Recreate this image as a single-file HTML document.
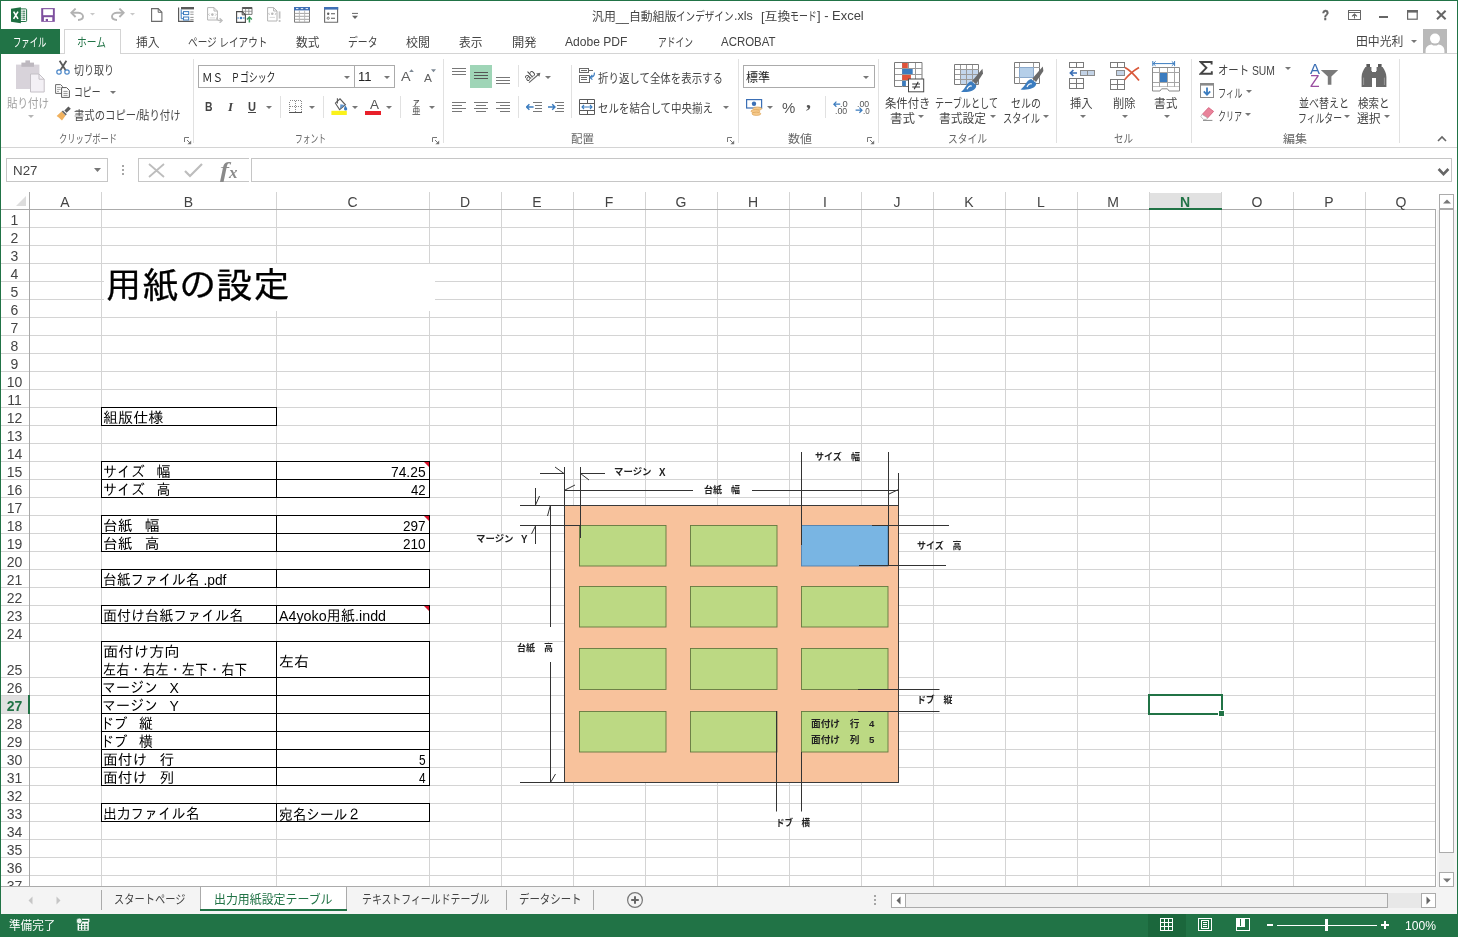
<!DOCTYPE html>
<html lang="ja"><head><meta charset="utf-8"><title>Excel</title><style>
html,body{margin:0;padding:0;background:#fff}
#win{position:relative;width:1458px;height:937px;overflow:hidden;background:#fff;font-family:"Liberation Sans","Noto Sans CJK JP",sans-serif;will-change:transform}
.b{position:absolute;display:block}
.t{position:absolute;white-space:pre;transform-origin:0 50%;display:block}
.ui{font-family:"Liberation Sans","Noto Sans CJK JP",sans-serif}
.cell{font-family:"Liberation Sans","IPAGothic","Noto Sans CJK JP",sans-serif}
.serif{font-family:"Liberation Serif",serif}
.hd{font-family:"Liberation Sans","IPAGothic","Noto Sans CJK JP",sans-serif;font-size:14px;line-height:18.5px;text-align:center;color:#444;transform:none}
.rn{font-family:"Liberation Sans","IPAGothic","Noto Sans CJK JP",sans-serif;font-size:14px;line-height:20px;text-align:center;color:#444}
</style></head>
<body><div id="win">
<div id="sheet"><svg class="b" style="left:0;top:0" width="1458" height="887" shape-rendering="crispEdges"><path d="M0 227.5H1436" stroke="#d4d4d4"/><path d="M0 245.5H1436" stroke="#d4d4d4"/><path d="M0 263.5H1436" stroke="#d4d4d4"/><path d="M0 281.5H1436" stroke="#d4d4d4"/><path d="M0 299.5H1436" stroke="#d4d4d4"/><path d="M0 317.5H1436" stroke="#d4d4d4"/><path d="M0 335.5H1436" stroke="#d4d4d4"/><path d="M0 353.5H1436" stroke="#d4d4d4"/><path d="M0 371.5H1436" stroke="#d4d4d4"/><path d="M0 389.5H1436" stroke="#d4d4d4"/><path d="M0 407.5H1436" stroke="#d4d4d4"/><path d="M0 425.5H1436" stroke="#d4d4d4"/><path d="M0 443.5H1436" stroke="#d4d4d4"/><path d="M0 461.5H1436" stroke="#d4d4d4"/><path d="M0 479.5H1436" stroke="#d4d4d4"/><path d="M0 497.5H1436" stroke="#d4d4d4"/><path d="M0 515.5H1436" stroke="#d4d4d4"/><path d="M0 533.5H1436" stroke="#d4d4d4"/><path d="M0 551.5H1436" stroke="#d4d4d4"/><path d="M0 569.5H1436" stroke="#d4d4d4"/><path d="M0 587.5H1436" stroke="#d4d4d4"/><path d="M0 605.5H1436" stroke="#d4d4d4"/><path d="M0 623.5H1436" stroke="#d4d4d4"/><path d="M0 641.5H1436" stroke="#d4d4d4"/><path d="M0 677.5H1436" stroke="#d4d4d4"/><path d="M0 695.5H1436" stroke="#d4d4d4"/><path d="M0 713.5H1436" stroke="#d4d4d4"/><path d="M0 731.5H1436" stroke="#d4d4d4"/><path d="M0 749.5H1436" stroke="#d4d4d4"/><path d="M0 767.5H1436" stroke="#d4d4d4"/><path d="M0 785.5H1436" stroke="#d4d4d4"/><path d="M0 803.5H1436" stroke="#d4d4d4"/><path d="M0 821.5H1436" stroke="#d4d4d4"/><path d="M0 839.5H1436" stroke="#d4d4d4"/><path d="M0 857.5H1436" stroke="#d4d4d4"/><path d="M0 875.5H1436" stroke="#d4d4d4"/><path d="M101.5 192V886" stroke="#d4d4d4"/><path d="M276.5 192V886" stroke="#d4d4d4"/><path d="M429.5 192V886" stroke="#d4d4d4"/><path d="M501.5 192V886" stroke="#d4d4d4"/><path d="M573.5 192V886" stroke="#d4d4d4"/><path d="M645.5 192V886" stroke="#d4d4d4"/><path d="M717.5 192V886" stroke="#d4d4d4"/><path d="M789.5 192V886" stroke="#d4d4d4"/><path d="M861.5 192V886" stroke="#d4d4d4"/><path d="M933.5 192V886" stroke="#d4d4d4"/><path d="M1005.5 192V886" stroke="#d4d4d4"/><path d="M1077.5 192V886" stroke="#d4d4d4"/><path d="M1149.5 192V886" stroke="#d4d4d4"/><path d="M1221.5 192V886" stroke="#d4d4d4"/><path d="M1293.5 192V886" stroke="#d4d4d4"/><path d="M1365.5 192V886" stroke="#d4d4d4"/><path d="M0 209.5H1436" stroke="#ababab"/><path d="M29.5 192V886" stroke="#a8a8a8"/><path d="M1435.5 210V886" stroke="#ababab"/></svg>
<svg class="b" style="left:15px;top:196px;" width="12" height="11" viewBox="0 0 12 11"><path d="M11 0V10H1Z" fill="#dddddd"/></svg>
<div class="b" style="left:1150px;top:193px;width:71px;height:15px;background:#e1e1e1"></div>
<div class="b" style="left:1149px;top:208px;width:73px;height:2px;background:#217346"></div>
<div class="b" style="left:1px;top:696px;width:27px;height:17px;background:#e1e1e1"></div>
<div class="b" style="left:28px;top:695px;width:2px;height:19px;background:#217346"></div>
<span class="t hd" style="left:29px;top:193px;width:72px">A</span>
<span class="t hd" style="left:101px;top:193px;width:175px">B</span>
<span class="t hd" style="left:276px;top:193px;width:153px">C</span>
<span class="t hd" style="left:429px;top:193px;width:72px">D</span>
<span class="t hd" style="left:501px;top:193px;width:72px">E</span>
<span class="t hd" style="left:573px;top:193px;width:72px">F</span>
<span class="t hd" style="left:645px;top:193px;width:72px">G</span>
<span class="t hd" style="left:717px;top:193px;width:72px">H</span>
<span class="t hd" style="left:789px;top:193px;width:72px">I</span>
<span class="t hd" style="left:861px;top:193px;width:72px">J</span>
<span class="t hd" style="left:933px;top:193px;width:72px">K</span>
<span class="t hd" style="left:1005px;top:193px;width:72px">L</span>
<span class="t hd" style="left:1077px;top:193px;width:72px">M</span>
<span class="t hd" style="left:1149px;top:193px;width:72px;color:#217346;font-weight:700">N</span>
<span class="t hd" style="left:1221px;top:193px;width:72px">O</span>
<span class="t hd" style="left:1293px;top:193px;width:72px">P</span>
<span class="t hd" style="left:1365px;top:193px;width:72px">Q</span>
<span class="t rn" style="left:0;top:210px;width:29px;">1</span>
<span class="t rn" style="left:0;top:228px;width:29px;">2</span>
<span class="t rn" style="left:0;top:246px;width:29px;">3</span>
<span class="t rn" style="left:0;top:264px;width:29px;">4</span>
<span class="t rn" style="left:0;top:282px;width:29px;">5</span>
<span class="t rn" style="left:0;top:300px;width:29px;">6</span>
<span class="t rn" style="left:0;top:318px;width:29px;">7</span>
<span class="t rn" style="left:0;top:336px;width:29px;">8</span>
<span class="t rn" style="left:0;top:354px;width:29px;">9</span>
<span class="t rn" style="left:0;top:372px;width:29px;">10</span>
<span class="t rn" style="left:0;top:390px;width:29px;">11</span>
<span class="t rn" style="left:0;top:408px;width:29px;">12</span>
<span class="t rn" style="left:0;top:426px;width:29px;">13</span>
<span class="t rn" style="left:0;top:444px;width:29px;">14</span>
<span class="t rn" style="left:0;top:462px;width:29px;">15</span>
<span class="t rn" style="left:0;top:480px;width:29px;">16</span>
<span class="t rn" style="left:0;top:498px;width:29px;">17</span>
<span class="t rn" style="left:0;top:516px;width:29px;">18</span>
<span class="t rn" style="left:0;top:534px;width:29px;">19</span>
<span class="t rn" style="left:0;top:552px;width:29px;">20</span>
<span class="t rn" style="left:0;top:570px;width:29px;">21</span>
<span class="t rn" style="left:0;top:588px;width:29px;">22</span>
<span class="t rn" style="left:0;top:606px;width:29px;">23</span>
<span class="t rn" style="left:0;top:624px;width:29px;">24</span>
<span class="t rn" style="left:0;top:660px;width:29px;">25</span>
<span class="t rn" style="left:0;top:678px;width:29px;">26</span>
<span class="t rn" style="left:0;top:696px;width:29px;color:#217346;font-weight:700;">27</span>
<span class="t rn" style="left:0;top:714px;width:29px;">28</span>
<span class="t rn" style="left:0;top:732px;width:29px;">29</span>
<span class="t rn" style="left:0;top:750px;width:29px;">30</span>
<span class="t rn" style="left:0;top:768px;width:29px;">31</span>
<span class="t rn" style="left:0;top:786px;width:29px;">32</span>
<span class="t rn" style="left:0;top:804px;width:29px;">33</span>
<span class="t rn" style="left:0;top:822px;width:29px;">34</span>
<span class="t rn" style="left:0;top:840px;width:29px;">35</span>
<span class="t rn" style="left:0;top:858px;width:29px;">36</span>
<span class="t rn" style="left:0;top:876px;width:29px;">37</span>
<div class="b" style="left:104px;top:264px;width:331px;height:47px;background:#fff"></div>
<span id="t0" class="t cell" style="left:104.5px;top:264px;font-size:36px;line-height:44px;color:#000;transform:scaleX(1.0278);-webkit-text-stroke:0.3px #000;">用紙の設定</span>
<div class="b" style="left:101px;top:407px;width:176px;height:19px;border:1px solid #000;box-sizing:border-box"></div>
<div class="b" style="left:101px;top:461px;width:176px;height:19px;border:1px solid #000;box-sizing:border-box"></div>
<div class="b" style="left:276px;top:461px;width:154px;height:19px;border:1px solid #000;box-sizing:border-box"></div>
<div class="b" style="left:101px;top:479px;width:176px;height:19px;border:1px solid #000;box-sizing:border-box"></div>
<div class="b" style="left:276px;top:479px;width:154px;height:19px;border:1px solid #000;box-sizing:border-box"></div>
<div class="b" style="left:101px;top:515px;width:176px;height:19px;border:1px solid #000;box-sizing:border-box"></div>
<div class="b" style="left:276px;top:515px;width:154px;height:19px;border:1px solid #000;box-sizing:border-box"></div>
<div class="b" style="left:101px;top:533px;width:176px;height:19px;border:1px solid #000;box-sizing:border-box"></div>
<div class="b" style="left:276px;top:533px;width:154px;height:19px;border:1px solid #000;box-sizing:border-box"></div>
<div class="b" style="left:101px;top:569px;width:176px;height:19px;border:1px solid #000;box-sizing:border-box"></div>
<div class="b" style="left:276px;top:569px;width:154px;height:19px;border:1px solid #000;box-sizing:border-box"></div>
<div class="b" style="left:101px;top:605px;width:176px;height:19px;border:1px solid #000;box-sizing:border-box"></div>
<div class="b" style="left:276px;top:605px;width:154px;height:19px;border:1px solid #000;box-sizing:border-box"></div>
<div class="b" style="left:101px;top:641px;width:176px;height:37px;border:1px solid #000;box-sizing:border-box"></div>
<div class="b" style="left:276px;top:641px;width:154px;height:37px;border:1px solid #000;box-sizing:border-box"></div>
<div class="b" style="left:101px;top:677px;width:176px;height:19px;border:1px solid #000;box-sizing:border-box"></div>
<div class="b" style="left:276px;top:677px;width:154px;height:19px;border:1px solid #000;box-sizing:border-box"></div>
<div class="b" style="left:101px;top:695px;width:176px;height:19px;border:1px solid #000;box-sizing:border-box"></div>
<div class="b" style="left:276px;top:695px;width:154px;height:19px;border:1px solid #000;box-sizing:border-box"></div>
<div class="b" style="left:101px;top:713px;width:176px;height:19px;border:1px solid #000;box-sizing:border-box"></div>
<div class="b" style="left:276px;top:713px;width:154px;height:19px;border:1px solid #000;box-sizing:border-box"></div>
<div class="b" style="left:101px;top:731px;width:176px;height:19px;border:1px solid #000;box-sizing:border-box"></div>
<div class="b" style="left:276px;top:731px;width:154px;height:19px;border:1px solid #000;box-sizing:border-box"></div>
<div class="b" style="left:101px;top:749px;width:176px;height:19px;border:1px solid #000;box-sizing:border-box"></div>
<div class="b" style="left:276px;top:749px;width:154px;height:19px;border:1px solid #000;box-sizing:border-box"></div>
<div class="b" style="left:101px;top:767px;width:176px;height:19px;border:1px solid #000;box-sizing:border-box"></div>
<div class="b" style="left:276px;top:767px;width:154px;height:19px;border:1px solid #000;box-sizing:border-box"></div>
<div class="b" style="left:101px;top:803px;width:176px;height:19px;border:1px solid #000;box-sizing:border-box"></div>
<div class="b" style="left:276px;top:803px;width:154px;height:19px;border:1px solid #000;box-sizing:border-box"></div>
<span id="t1" class="t cell" style="left:103.3px;top:409px;font-size:15px;line-height:18px;color:#000;transform:scaleX(1.0067);">組版仕様</span>
<span id="t2" class="t cell" style="left:103.3px;top:463px;font-size:15px;line-height:18px;color:#000;transform:scaleX(0.9295);">サイズ   幅</span>
<span id="t3" class="t cell" style="left:103.3px;top:481px;font-size:15px;line-height:18px;color:#000;transform:scaleX(0.9295);">サイズ   高</span>
<span id="t4" class="t cell" style="left:103.3px;top:517px;font-size:15px;line-height:18px;color:#000;transform:scaleX(0.9806);">台紙   幅</span>
<span id="t5" class="t cell" style="left:103.3px;top:535px;font-size:15px;line-height:18px;color:#000;transform:scaleX(0.9806);">台紙   高</span>
<span id="t6" class="t cell" style="left:103.3px;top:571px;font-size:15px;line-height:18px;color:#000;transform:scaleX(0.9196);">台紙ファイル名 .pdf</span>
<span id="t7" class="t cell" style="left:103.3px;top:607px;font-size:15px;line-height:18px;color:#000;transform:scaleX(0.9360);">面付け台紙ファイル名</span>
<span id="t8" class="t cell" style="left:103.3px;top:643px;font-size:15px;line-height:18px;color:#000;transform:scaleX(1.0227);">面付け方向</span>
<span id="t9" class="t cell" style="left:103.3px;top:660.5px;font-size:15px;line-height:18px;color:#000;transform:scaleX(0.8752);">左右・右左・左下・右下</span>
<span id="t10" class="t cell" style="left:101.8px;top:679px;font-size:15px;line-height:18px;color:#000;transform:scaleX(0.9319);">マージン   X</span>
<span id="t11" class="t cell" style="left:101.8px;top:697px;font-size:15px;line-height:18px;color:#000;transform:scaleX(0.9319);">マージン   Y</span>
<span id="t12" class="t cell" style="left:99.8px;top:715px;font-size:15px;line-height:18px;color:#000;transform:scaleX(0.9198);">ドブ   縦</span>
<span id="t13" class="t cell" style="left:99.8px;top:733px;font-size:15px;line-height:18px;color:#000;transform:scaleX(0.9198);">ドブ   横</span>
<span id="t14" class="t cell" style="left:103.3px;top:751px;font-size:15px;line-height:18px;color:#000;transform:scaleX(0.9846);">面付け   行</span>
<span id="t15" class="t cell" style="left:103.3px;top:769px;font-size:15px;line-height:18px;color:#000;transform:scaleX(0.9846);">面付け   列</span>
<span id="t16" class="t cell" style="left:103.3px;top:805px;font-size:15px;line-height:18px;color:#000;transform:scaleX(0.9181);">出力ファイル名</span>
<span id="t17" class="t cell" style="left:391.3px;top:463px;font-size:15px;line-height:18px;color:#000;transform:scaleX(0.9215);">74.25</span>
<span id="t18" class="t cell" style="left:411.3px;top:481px;font-size:15px;line-height:18px;color:#000;transform:scaleX(0.8749);">42</span>
<span id="t19" class="t cell" style="left:403.3px;top:517px;font-size:15px;line-height:18px;color:#000;transform:scaleX(0.9029);">297</span>
<span id="t20" class="t cell" style="left:403.3px;top:535px;font-size:15px;line-height:18px;color:#000;transform:scaleX(0.9029);">210</span>
<span id="t21" class="t cell" style="left:419.3px;top:751px;font-size:15px;line-height:18px;color:#000;transform:scaleX(0.7910);">5</span>
<span id="t22" class="t cell" style="left:419.3px;top:769px;font-size:15px;line-height:18px;color:#000;transform:scaleX(0.7910);">4</span>
<span id="t23" class="t cell" style="left:279px;top:607px;font-size:15px;line-height:18px;color:#000;transform:scaleX(0.9506);">A4yoko用紙.indd</span>
<span id="t24" class="t cell" style="left:279px;top:653px;font-size:15px;line-height:18px;color:#000;transform:scaleX(1.0000);">左右</span>
<span id="t25" class="t cell" style="left:279px;top:806px;font-size:15px;line-height:18px;color:#000;transform:scaleX(0.9111);">宛名シール２</span>
<svg class="b" style="left:423.5px;top:462px;" width="5.5" height="5.5" viewBox="0 0 5.5 5.5"><path d="M0 0H5.5V5.5Z" fill="#d8112a"/></svg>
<svg class="b" style="left:423.5px;top:516px;" width="5.5" height="5.5" viewBox="0 0 5.5 5.5"><path d="M0 0H5.5V5.5Z" fill="#d8112a"/></svg>
<svg class="b" style="left:423.5px;top:606px;" width="5.5" height="5.5" viewBox="0 0 5.5 5.5"><path d="M0 0H5.5V5.5Z" fill="#d8112a"/></svg>
<div class="b" style="left:1148px;top:694px;width:75px;height:21px;border:2px solid #217346;box-sizing:border-box"></div>
<div class="b" style="left:1219px;top:711px;width:6px;height:6px;background:#217346;border:1px solid #fff;box-sizing:border-box;width:7px;height:7px;left:1218px;top:710px"></div>
<svg class="b" style="left:460px;top:440px" width="520" height="400" viewBox="460 440 520 400"><rect x="564.5" y="505.5" width="334" height="277" fill="#f8c29c" stroke="#3a3a3a" stroke-width="1"/><rect x="579.5" y="525.5" width="86.5" height="40.5" fill="#bcd983" stroke="#64793f" stroke-width="0.9"/><rect x="690.5" y="525.5" width="86.5" height="40.5" fill="#bcd983" stroke="#64793f" stroke-width="0.9"/><rect x="801.5" y="525.5" width="86.5" height="40.5" fill="#79b5e3" stroke="#4f7fae" stroke-width="0.9"/><rect x="579.5" y="586.5" width="86.5" height="40.5" fill="#bcd983" stroke="#64793f" stroke-width="0.9"/><rect x="690.5" y="586.5" width="86.5" height="40.5" fill="#bcd983" stroke="#64793f" stroke-width="0.9"/><rect x="801.5" y="586.5" width="86.5" height="40.5" fill="#bcd983" stroke="#64793f" stroke-width="0.9"/><rect x="579.5" y="648.5" width="86.5" height="41" fill="#bcd983" stroke="#64793f" stroke-width="0.9"/><rect x="690.5" y="648.5" width="86.5" height="41" fill="#bcd983" stroke="#64793f" stroke-width="0.9"/><rect x="801.5" y="648.5" width="86.5" height="41" fill="#bcd983" stroke="#64793f" stroke-width="0.9"/><rect x="579.5" y="711.5" width="86.5" height="40.5" fill="#bcd983" stroke="#64793f" stroke-width="0.9"/><rect x="690.5" y="711.5" width="86.5" height="40.5" fill="#bcd983" stroke="#64793f" stroke-width="0.9"/><rect x="801.5" y="711.5" width="86.5" height="40.5" fill="#bcd983" stroke="#64793f" stroke-width="0.9"/><path d="M540 473.5L564 473.5" stroke="#333" stroke-width="1" fill="none"/><path d="M555 467L564 473.5" stroke="#333" stroke-width="1" fill="none"/><path d="M580.5 473.5L605 473.5" stroke="#333" stroke-width="1" fill="none"/><path d="M580.5 473.5L589 480" stroke="#333" stroke-width="1" fill="none"/><path d="M564.5 467L564.5 538" stroke="#333" stroke-width="1" fill="none"/><path d="M580.5 467L580.5 538" stroke="#333" stroke-width="1" fill="none"/><path d="M564 490.5L693 490.5" stroke="#333" stroke-width="1" fill="none"/><path d="M752 490.5L898.5 490.5" stroke="#333" stroke-width="1" fill="none"/><path d="M564 490.5L575 485" stroke="#333" stroke-width="1" fill="none"/><path d="M888 494.5L898.5 489.5" stroke="#333" stroke-width="1" fill="none"/><path d="M898.5 473L898.5 506" stroke="#333" stroke-width="1" fill="none"/><path d="M520 505.5L565 505.5" stroke="#333" stroke-width="1" fill="none"/><path d="M520 525.5L580 525.5" stroke="#333" stroke-width="1" fill="none"/><path d="M535.5 488L535.5 505" stroke="#333" stroke-width="1" fill="none"/><path d="M535.5 505L539.5 496" stroke="#333" stroke-width="1" fill="none"/><path d="M535.5 526L535.5 544" stroke="#333" stroke-width="1" fill="none"/><path d="M535.5 526L531.5 534" stroke="#333" stroke-width="1" fill="none"/><path d="M550.5 505L550.5 627" stroke="#333" stroke-width="1" fill="none"/><path d="M550.5 662L550.5 782.5" stroke="#333" stroke-width="1" fill="none"/><path d="M550.5 505L547.5 516" stroke="#333" stroke-width="1" fill="none"/><path d="M550.5 782.5L555.5 774" stroke="#333" stroke-width="1" fill="none"/><path d="M520 782.5L565 782.5" stroke="#333" stroke-width="1" fill="none"/><path d="M801.5 452L801.5 545" stroke="#333" stroke-width="1" fill="none"/><path d="M888.5 452L888.5 565" stroke="#333" stroke-width="1" fill="none"/><path d="M872 525.5L949 525.5" stroke="#333" stroke-width="1" fill="none"/><path d="M859 565.5L946 565.5" stroke="#333" stroke-width="1" fill="none"/><path d="M858 689.5L939.5 689.5" stroke="#333" stroke-width="1" fill="none"/><path d="M858 711.5L939.5 711.5" stroke="#333" stroke-width="1" fill="none"/><path d="M776.5 711L776.5 811.5" stroke="#333" stroke-width="1" fill="none"/><path d="M801.5 752L801.5 811.5" stroke="#333" stroke-width="1" fill="none"/></svg>
<span id="t26" class="t ui" style="left:613.5px;top:465.8px;font-size:9.5px;line-height:12px;color:#222;font-weight:700;transform:scaleX(0.9917);">マージン</span>
<span id="t27" class="t ui" style="left:659.3px;top:466px;font-size:11px;line-height:12px;color:#222;font-weight:700;transform:scaleX(0.8851);">X</span>
<span id="t28" class="t ui" style="left:704px;top:483.8px;font-size:9.5px;line-height:12px;color:#222;font-weight:700;transform:scaleX(0.9470);">台紙　幅</span>
<span id="t29" class="t ui" style="left:815px;top:451.3px;font-size:9.5px;line-height:12px;color:#222;font-weight:700;transform:scaleX(0.9530);">サイズ　幅</span>
<span id="t30" class="t ui" style="left:475.7px;top:532.8px;font-size:9.5px;line-height:12px;color:#222;font-weight:700;transform:scaleX(0.9917);">マージン</span>
<span id="t31" class="t ui" style="left:520.5px;top:533px;font-size:11px;line-height:12px;color:#222;font-weight:700;transform:scaleX(0.8851);">Y</span>
<span id="t32" class="t ui" style="left:916.5px;top:539.8px;font-size:9.5px;line-height:12px;color:#222;font-weight:700;transform:scaleX(0.9424);">サイズ　高</span>
<span id="t33" class="t ui" style="left:517px;top:641.8px;font-size:9.5px;line-height:12px;color:#222;font-weight:700;transform:scaleX(0.9470);">台紙　高</span>
<span id="t34" class="t ui" style="left:916.5px;top:693.8px;font-size:9.5px;line-height:12px;color:#222;font-weight:700;transform:scaleX(0.9338);">ドブ　縦</span>
<span id="t35" class="t ui" style="left:811px;top:717.8px;font-size:9.5px;line-height:12px;color:#222;font-weight:700;transform:scaleX(1.0193);">面付け　行　4</span>
<span id="t36" class="t ui" style="left:811px;top:733.8px;font-size:9.5px;line-height:12px;color:#222;font-weight:700;transform:scaleX(1.0193);">面付け　列　5</span>
<span id="t37" class="t ui" style="left:776px;top:817.3px;font-size:9.5px;line-height:12px;color:#222;font-weight:700;transform:scaleX(0.8944);">ドブ　横</span></div>
<div id="bottom"><div class="b" style="left:1px;top:887px;width:1456px;height:27px;background:#f4f4f4"></div>
<div class="b" style="left:1px;top:886px;width:1435px;height:1px;background:#ababab"></div>
<div class="b" style="left:1437px;top:192px;width:20px;height:695px;background:#f4f4f4"></div>
<div class="b" style="left:1437px;top:192px;width:20px;height:18px;background:#fff"></div>
<div class="b" style="left:1439px;top:209px;width:15px;height:663px;background:#f0f0f0"></div>
<div class="b" style="left:1439px;top:209px;width:15px;height:644px;background:#fff;border:1px solid #ababab;box-sizing:border-box"></div>
<div class="b" style="left:1439px;top:194px;width:15px;height:15px;background:#fff;border:1px solid #ababab;box-sizing:border-box"></div>
<div class="b" style="left:1439px;top:872px;width:15px;height:15px;background:#fff;border:1px solid #ababab;box-sizing:border-box"></div>
<svg class="b" style="left:1442.5px;top:199px;" width="8" height="5" viewBox="0 0 8 5"><path d="M0 4.5H8L4 0.5Z" fill="#777"/></svg>
<svg class="b" style="left:1442.5px;top:877.5px;" width="8" height="5" viewBox="0 0 8 5"><path d="M0 0.5H8L4 4.5Z" fill="#777"/></svg>
<svg class="b" style="left:28px;top:895.5px;" width="5" height="9" viewBox="0 0 5 9"><path d="M4.5 0.5V8.5L0.5 4.5Z" fill="#c6c6c6"/></svg>
<svg class="b" style="left:56px;top:895.5px;" width="5" height="9" viewBox="0 0 5 9"><path d="M0.5 0.5V8.5L4.5 4.5Z" fill="#c6c6c6"/></svg>
<div class="b" style="left:101px;top:890px;width:1px;height:20px;background:#ababab"></div>
<div class="b" style="left:506px;top:890px;width:1px;height:20px;background:#ababab"></div>
<div class="b" style="left:593px;top:890px;width:1px;height:20px;background:#ababab"></div>
<span id="t38" class="t ui" style="left:114px;top:891px;font-size:12.5px;line-height:18px;color:#444;transform:scaleX(0.8193);">スタートページ</span>
<div class="b" style="left:200px;top:887px;width:147px;height:23px;background:#fff"></div>
<div class="b" style="left:200px;top:887px;width:1px;height:24px;background:#ababab"></div>
<div class="b" style="left:346px;top:887px;width:1px;height:24px;background:#ababab"></div>
<div class="b" style="left:200px;top:909px;width:147px;height:2px;background:#217346"></div>
<span id="t39" class="t ui" style="left:213.5px;top:891px;font-size:12.5px;line-height:18px;color:#217346;transform:scaleX(0.9536);">出力用紙設定テーブル</span>
<span id="t40" class="t ui" style="left:361.5px;top:891px;font-size:12.5px;line-height:18px;color:#444;transform:scaleX(0.7912);">テキストフィールドテーブル</span>
<span id="t41" class="t ui" style="left:519px;top:891px;font-size:12.5px;line-height:18px;color:#444;transform:scaleX(0.8332);">データシート</span>
<svg class="b" style="left:626px;top:891px;" width="18" height="18" viewBox="0 0 18 18"><circle cx="9" cy="9" r="7.4" fill="none" stroke="#777" stroke-width="1.2"/><path d="M5.2 9H12.8M9 5.2V12.8" stroke="#666" stroke-width="2"/></svg>
<div class="b" style="left:874px;top:895px;width:2px;height:2px;background:#a6a6a6"></div>
<div class="b" style="left:874px;top:899px;width:2px;height:2px;background:#a6a6a6"></div>
<div class="b" style="left:874px;top:903px;width:2px;height:2px;background:#a6a6a6"></div>
<div class="b" style="left:891px;top:893px;width:545px;height:15px;background:#e8e8e8"></div>
<div class="b" style="left:891px;top:893px;width:15px;height:15px;background:#fff;border:1px solid #ababab;box-sizing:border-box"></div>
<div class="b" style="left:1421px;top:893px;width:15px;height:15px;background:#fff;border:1px solid #ababab;box-sizing:border-box"></div>
<div class="b" style="left:905px;top:893px;width:483px;height:15px;background:#f0f0f0;border:1px solid #ababab;box-sizing:border-box"></div>
<svg class="b" style="left:896px;top:896px;" width="5" height="9" viewBox="0 0 5 9"><path d="M4.5 0.5V8.5L0.5 4.5Z" fill="#666"/></svg>
<svg class="b" style="left:1426px;top:896px;" width="5" height="9" viewBox="0 0 5 9"><path d="M0.5 0.5V8.5L4.5 4.5Z" fill="#666"/></svg>
<div class="b" style="left:0px;top:914px;width:1458px;height:23px;background:#217346"></div>
<span id="t42" class="t ui" style="left:8.5px;top:918px;font-size:12px;line-height:17px;color:#fff;transform:scaleX(0.9684);">準備完了</span>
<svg class="b" style="left:76px;top:918px;" width="14" height="14" viewBox="0 0 14 14"><rect x="1.6" y="3.6" width="11.2" height="9" fill="#fff"/><path d="M6 1.4H12.8V4" fill="none" stroke="#fff" stroke-width="1.2"/><rect x="3" y="5.6" width="2" height="1.6" fill="#217346"/><rect x="3" y="8" width="2" height="1.6" fill="#217346"/><rect x="3" y="10.4" width="2" height="1.6" fill="#217346"/><rect x="6.2" y="5.6" width="2" height="1.6" fill="#217346"/><rect x="6.2" y="8" width="2" height="1.6" fill="#217346"/><rect x="6.2" y="10.4" width="2" height="1.6" fill="#217346"/><rect x="9.4" y="5.6" width="2" height="1.6" fill="#217346"/><rect x="9.4" y="8" width="2" height="1.6" fill="#217346"/><rect x="9.4" y="10.4" width="2" height="1.6" fill="#217346"/><circle cx="3.2" cy="3" r="2.9" fill="#e6f2ea" stroke="#217346" stroke-width="0.7"/></svg>
<div class="b" style="left:1148px;top:914px;width:38px;height:23px;background:#1b673c"></div>
<svg class="b" style="left:1160px;top:918px;" width="13" height="13" viewBox="0 0 13 13"><path d="M0.5 0.5H12.5V12.5H0.5ZM0.5 4.5H12.5M0.5 8.5H12.5M4.5 0.5V12.5M8.5 0.5V12.5" fill="none" stroke="#fff" stroke-width="1" shape-rendering="crispEdges"/></svg>
<svg class="b" style="left:1198px;top:918px;shape-rendering:crispEdges;" width="14" height="13" viewBox="0 0 14 13"><path d="M0.5 0.5H13.5V12.5H0.5Z" fill="none" stroke="#fff"/><path d="M3.5 2.5H10.5V10.5H3.5Z" fill="none" stroke="#fff"/><path d="M5 4.5H9M5 6.5H9M5 8.5H9" stroke="#fff" stroke-width="1"/></svg>
<svg class="b" style="left:1236px;top:918px;shape-rendering:crispEdges;" width="15" height="13" viewBox="0 0 15 13"><path d="M0.5 0.5H13.5V12.5H0.5Z" fill="none" stroke="#fff"/><path d="M1 1H4.4V8H1ZM5.4 1H8.6V8H5.4Z" fill="#fff"/><path d="M1 8H9" stroke="#fff"/></svg>
<div class="b" style="left:1267px;top:924px;width:6px;height:2px;background:#fff"></div>
<div class="b" style="left:1277px;top:924.5px;width:100px;height:1px;background:#fff"></div>
<div class="b" style="left:1325px;top:919px;width:3px;height:12px;background:#fff"></div>
<div class="b" style="left:1380.5px;top:924px;width:8px;height:2px;background:#fff"></div>
<div class="b" style="left:1383.5px;top:921px;width:2px;height:8px;background:#fff"></div>
<span id="t43" class="t ui" style="left:1405px;top:918px;font-size:12px;line-height:17px;color:#fff;transform:scaleX(1.0097);">100%</span></div>
<div id="titlebar"><span id="t44" class="t ui" style="left:591.5px;top:8.5px;font-size:12px;line-height:17px;color:#444;transform:scaleX(0.9899);">汎用__自動組版</span>
<span id="t45" class="t ui" style="left:676px;top:8.5px;font-size:12px;line-height:17px;color:#444;transform:scaleX(0.7984);">インデザイン</span>
<span id="t46" class="t ui" style="left:733.8px;top:7.5px;font-size:12px;line-height:17px;color:#444;transform:scaleX(1.0389);">.xls</span>
<span id="t47" class="t ui" style="left:760.5px;top:8.5px;font-size:12px;line-height:17px;color:#444;transform:scaleX(1.0679);">[互換</span>
<span id="t48" class="t ui" style="left:789.7px;top:8.5px;font-size:12px;line-height:17px;color:#444;transform:scaleX(0.7441);">モード</span>
<span id="t49" class="t ui" style="left:816.8px;top:7.5px;font-size:12px;line-height:17px;color:#444;transform:scaleX(1.0774);">] - Excel</span>
<svg class="b" style="left:11px;top:6.5px;" width="17" height="17" viewBox="0 0 17 17"><rect x="8" y="1.9" width="7.6" height="12.6" rx="0.8" fill="#fff" stroke="#217346" stroke-width="1"/><path d="M11.4 4.2H14.2M11.4 6.2H14.2M11.4 8.2H14.2M11.4 10.2H14.2M11.4 12.2H14.2" stroke="#1e6b3f" stroke-width="1"/><path d="M9.6 4.2H10.6M9.6 6.2H10.6M9.6 8.2H10.6M9.6 10.2H10.6M9.6 12.2H10.6" stroke="#1e6b3f" stroke-width="0.9"/><path d="M0 1.8L9.9 0.2V16.2L0 14.7Z" fill="#1e6f42"/><path d="M2.6 4.7L7 11.9M7 4.7L2.6 11.9" stroke="#fff" stroke-width="1.6"/></svg>
<svg class="b" style="left:41px;top:8px;" width="14" height="14" viewBox="0 0 14 14"><path d="M0.2 0.1H13.8V13.8H0.2Z" fill="#7d4f9e"/><path d="M2.2 1.2H11.9V7.2H2.2Z" fill="#fff"/><path d="M2.9 9.2H11.3V13H2.9Z" fill="#fff"/><path d="M4.7 10.9H7V13H4.7Z" fill="#7d4f9e"/></svg>
<svg class="b" style="left:70px;top:8px;" width="15" height="13" viewBox="0 0 15 13"><path d="M1.3 4.8H8.2C11.6 4.8 13 7 13 8.6C13 10.6 11.4 12 8 12" fill="none" stroke="#b2b2b2" stroke-width="1.9"/><path d="M5.6 0.6L1.3 4.8L5.6 9" fill="none" stroke="#b2b2b2" stroke-width="1.9"/></svg>
<svg class="b" style="left:110px;top:8px;" width="15" height="13" viewBox="0 0 15 13"><g transform="translate(15,0) scale(-1,1)"><path d="M1.3 4.8H8.2C11.6 4.8 13 7 13 8.6C13 10.6 11.4 12 8 12" fill="none" stroke="#b2b2b2" stroke-width="1.9"/><path d="M5.6 0.6L1.3 4.8L5.6 9" fill="none" stroke="#b2b2b2" stroke-width="1.9"/></g></svg>
<svg class="b" style="left:90.2px;top:13px;" width="5" height="2.6" viewBox="0 0 5 2.6"><path d="M0 0H5 L2.5 2.6Z" fill="#c8c8c8"/></svg>
<svg class="b" style="left:130.2px;top:13px;" width="5" height="2.6" viewBox="0 0 5 2.6"><path d="M0 0H5 L2.5 2.6Z" fill="#c8c8c8"/></svg>
<svg class="b" style="left:151px;top:8px;" width="12" height="14" viewBox="0 0 12 14"><path d="M0.6 0.6H7.2L10.9 4.3V13.4H0.6Z" fill="#fff" stroke="#6a6a6a" stroke-width="1.1"/><path d="M7.2 0.6V4.3H10.9" fill="none" stroke="#6a6a6a" stroke-width="1"/></svg>
<svg class="b" style="left:178px;top:7px;" width="17" height="15" viewBox="0 0 17 15"><path d="M0.6 0.6V14.4H15.6" fill="none" stroke="#5a5a5a" stroke-width="1.2"/><path d="M3 0H16V2.4H3Z" fill="#5a5a5a"/><path d="M3.2 2.4V11.7H5.5M3.2 6.2H5.5" fill="none" stroke="#3b7cbf" stroke-width="1"/><rect x="5.5" y="4.6" width="5.2" height="3" fill="#fff" stroke="#3b7cbf" stroke-width="1"/><rect x="5.5" y="10" width="5.2" height="3" fill="#fff" stroke="#3b7cbf" stroke-width="1"/><path d="M12.3 5H15.6M12.3 7.3H15.6M12.3 10.4H15.6M12.3 12.7H15.6" stroke="#8a8a8a" stroke-width="0.9"/></svg>
<svg class="b" style="left:206px;top:7px;" width="18" height="16" viewBox="0 0 18 16"><path d="M1.6 0.6H8L11.4 4V13H1.6Z" fill="#fff" stroke="#b4b4b4" stroke-width="1"/><path d="M8 0.6V4H11.4" fill="none" stroke="#b4b4b4"/><path d="M3.6 6.6L2.6 7.6L3.6 8.6M9.2 6.6L10.2 7.6L9.2 8.6" fill="none" stroke="#b4b4b4" stroke-width="0.9"/><circle cx="6.4" cy="7.6" r="1.3" fill="#b9b9b9"/><path d="M3.6 10.9H9.2" stroke="#d8d8d8"/><path d="M10.6 10.6C10.6 13.4 12 13.6 16 13.6M13.6 11.2L16.2 13.6L13.6 16" fill="none" stroke="#bdbdbd" stroke-width="1.2"/></svg>
<svg class="b" style="left:236px;top:7px;" width="17" height="16" viewBox="0 0 17 16"><path d="M6.4 0.4H16V7.4H6.4Z" fill="#fff" stroke="#6a6a6a" stroke-width="0.9"/><path d="M6.4 0H16V2H6.4Z" fill="#5a5a5a"/><path d="M6.4 4.3H16M9.6 2V7.4M12.8 2V7.4" stroke="#8a8a8a" stroke-width="0.8"/><path d="M0.6 4.6H6.2L9.4 7.8V15.4H0.6Z" fill="#fff" stroke="#4a4a4a" stroke-width="1.1"/><path d="M6.2 4.6V7.8H9.4" fill="none" stroke="#4a4a4a"/><path d="M2.6 10L1.6 11L2.6 12M7.4 10L8.4 11L7.4 12" fill="none" stroke="#3b7cbf" stroke-width="0.9"/><circle cx="5" cy="11" r="1.3" fill="#3b7cbf"/><path d="M13.4 15.6V10.4M11 12.6L13.4 10L15.8 12.6" fill="none" stroke="#3d9a5c" stroke-width="1.5"/></svg>
<svg class="b" style="left:266px;top:7px;" width="16" height="16" viewBox="0 0 16 16"><path d="M1.6 0.6H7.6L11 4V14H1.6Z" fill="#fff" stroke="#b4b4b4" stroke-width="1"/><path d="M7.6 0.6V4H11" fill="none" stroke="#b4b4b4"/><path d="M3.6 5.8L2.6 6.8L3.6 7.8M9 5.8L10 6.8L9 7.8" fill="none" stroke="#b4b4b4" stroke-width="0.9"/><circle cx="6.3" cy="6.8" r="1.3" fill="#b9b9b9"/><path d="M3.6 10.4H9" stroke="#d8d8d8"/><path d="M13.6 4.4V11.6" stroke="#c2c2c2" stroke-width="1.8"/><path d="M13.6 13V15" stroke="#c2c2c2" stroke-width="1.8"/></svg>
<svg class="b" style="left:294px;top:7px;" width="16" height="16" viewBox="0 0 16 16"><path d="M0.5 0.5H15.5V15.2H0.5Z" fill="#fff" stroke="#7a7a7a" stroke-width="1"/><path d="M0 0H16V3.4H0Z" fill="#3f6fb5"/><path d="M2 1.6H4.4M6.8 1.6H9.2M11.6 1.6H14" stroke="#fff" stroke-width="0.9"/><path d="M0.5 6.4H15.5M0.5 9.3H15.5M0.5 12.3H15.5" stroke="#9a9a9a" stroke-width="0.9"/><path d="M5.4 3.4V15M10.6 3.4V15" stroke="#b5b5b5" stroke-width="0.9"/></svg>
<svg class="b" style="left:324px;top:7px;" width="15" height="16" viewBox="0 0 15 16"><path d="M0.6 0.6H13.6V15.2H0.6Z" fill="#fff" stroke="#6a6a6a" stroke-width="1.1"/><path d="M0 0H14.2V2.6H0Z" fill="#3f6fb5"/><circle cx="4.2" cy="6.8" r="1.2" fill="#5a5a5a"/><circle cx="4.2" cy="11.2" r="1.1" fill="#fff" stroke="#5a5a5a" stroke-width="0.8"/><path d="M7 6.8H11M7 11.2H11" stroke="#5a5a5a" stroke-width="1.1"/></svg>
<svg class="b" style="left:351px;top:12px;" width="8" height="8" viewBox="0 0 8 8"><path d="M1 1.4H7" stroke="#666" stroke-width="1"/><path d="M1 3.8H7L4 7Z" fill="#666"/></svg>
<span id="t50" class="t ui" style="left:1322px;top:5px;font-size:14px;line-height:20px;color:#666;font-weight:700;transform:scaleX(0.8175);-webkit-text-stroke:0.4px #666;">?</span>
<svg class="b" style="left:1348px;top:10px;" width="14" height="11" viewBox="0 0 14 11"><rect x="0.5" y="0.5" width="12" height="9" fill="none" stroke="#666" stroke-width="1"/><path d="M0.5 2.5H12.5" stroke="#666" stroke-width="1"/><path d="M6.5 8.6V4.2M4 6.4L6.5 4L9 6.4" fill="none" stroke="#666" stroke-width="1.1"/></svg>
<div class="b" style="left:1378.5px;top:15.5px;width:9px;height:2.3px;background:#666"></div>
<svg class="b" style="left:1407px;top:10px;" width="11" height="10" viewBox="0 0 11 10"><rect x="0.6" y="0.6" width="9.6" height="8.6" fill="none" stroke="#666" stroke-width="1.2"/><path d="M0 0H10.8V2.6H0Z" fill="#666"/></svg>
<svg class="b" style="left:1436px;top:10px;" width="11" height="10" viewBox="0 0 11 10"><path d="M1 0.8L9.6 9.2M9.6 0.8L1 9.2" stroke="#666" stroke-width="2" fill="none"/></svg></div>
<div id="tabs"><div class="b" style="left:1px;top:29px;width:59px;height:25px;background:#217346"></div>
<span id="t51" class="t ui" style="left:12.5px;top:34.5px;font-size:12px;line-height:17px;color:#fff;transform:scaleX(0.6977);">ファイル</span>
<div class="b" style="left:64px;top:29px;width:57px;height:25px;background:#fff;border:1px solid #d4d4d4;border-bottom:none;box-sizing:border-box"></div>
<span id="t52" class="t ui" style="left:77px;top:34.5px;font-size:12px;line-height:17px;color:#217346;transform:scaleX(0.8137);">ホーム</span>
<span id="t53" class="t ui" style="left:136px;top:34.5px;font-size:12px;line-height:17px;color:#444;transform:scaleX(0.9785);">挿入</span>
<span id="t54" class="t ui" style="left:188px;top:34.5px;font-size:12px;line-height:17px;color:#444;transform:scaleX(0.8021);">ページ レイアウト</span>
<span id="t55" class="t ui" style="left:296px;top:34.5px;font-size:12px;line-height:17px;color:#444;transform:scaleX(0.9785);">数式</span>
<span id="t56" class="t ui" style="left:348px;top:34.5px;font-size:12px;line-height:17px;color:#444;transform:scaleX(0.8191);">データ</span>
<span id="t57" class="t ui" style="left:406px;top:34.5px;font-size:12px;line-height:17px;color:#444;transform:scaleX(0.9993);">校閲</span>
<span id="t58" class="t ui" style="left:459px;top:34.5px;font-size:12px;line-height:17px;color:#444;transform:scaleX(0.9785);">表示</span>
<span id="t59" class="t ui" style="left:511.5px;top:34.5px;font-size:12px;line-height:17px;color:#444;transform:scaleX(1.0202);">開発</span>
<span id="t60" class="t ui" style="left:565px;top:34px;font-size:12px;line-height:17px;color:#444;transform:scaleX(1.0073);">Adobe PDF</span>
<span id="t61" class="t ui" style="left:657.5px;top:34.5px;font-size:12px;line-height:17px;color:#444;transform:scaleX(0.7289);">アドイン</span>
<span id="t62" class="t ui" style="left:721px;top:34px;font-size:12px;line-height:17px;color:#444;transform:scaleX(0.9540);">ACROBAT</span>
<span id="t63" class="t ui" style="left:1355.5px;top:33.5px;font-size:12px;line-height:17px;color:#444;transform:scaleX(0.9893);">田中光利</span>
<svg class="b" style="left:1410.5px;top:39.5px;" width="6" height="3" viewBox="0 0 6 3"><path d="M0 0H6 L3 3Z" fill="#777"/></svg>
<svg class="b" style="left:1423px;top:29px;" width="24" height="25" viewBox="0 0 24 25"><rect width="24" height="25" fill="#b9b9b9"/><circle cx="12" cy="9.6" r="5" fill="#fff"/><path d="M2.6 25V21.4C2.6 17.6 5.6 15.6 8.6 15.4C10.6 17 13.4 17 15.4 15.4C18.4 15.6 21.4 17.6 21.4 21.4V25Z" fill="#fff"/></svg></div>
<div id="ribbon"><div class="b" style="left:60px;top:53px;width:4px;height:1px;background:#d4d4d4"></div>
<div class="b" style="left:121px;top:53px;width:1336px;height:1px;background:#d4d4d4"></div>
<div class="b" style="left:1px;top:147px;width:1456px;height:1px;background:#d4d4d4"></div>
<div class="b" style="left:193px;top:59px;width:1px;height:84px;background:#e1e1e1"></div>
<div class="b" style="left:443px;top:59px;width:1px;height:84px;background:#e1e1e1"></div>
<div class="b" style="left:738px;top:59px;width:1px;height:84px;background:#e1e1e1"></div>
<div class="b" style="left:878px;top:59px;width:1px;height:84px;background:#e1e1e1"></div>
<div class="b" style="left:1056px;top:59px;width:1px;height:84px;background:#e1e1e1"></div>
<div class="b" style="left:1191px;top:59px;width:1px;height:84px;background:#e1e1e1"></div>
<div class="b" style="left:1399px;top:59px;width:1px;height:84px;background:#e1e1e1"></div>
<span id="t64" class="t ui" style="left:59px;top:130.9px;font-size:11.5px;line-height:16px;color:#666;transform:scaleX(0.7205);">クリップボード</span>
<span id="t65" class="t ui" style="left:295px;top:130.9px;font-size:11.5px;line-height:16px;color:#666;transform:scaleX(0.6739);">フォント</span>
<span id="t66" class="t ui" style="left:571px;top:130.9px;font-size:11.5px;line-height:16px;color:#666;transform:scaleX(1.0000);">配置</span>
<span id="t67" class="t ui" style="left:788px;top:130.9px;font-size:11.5px;line-height:16px;color:#666;transform:scaleX(1.0435);">数値</span>
<span id="t68" class="t ui" style="left:948px;top:130.9px;font-size:11.5px;line-height:16px;color:#666;transform:scaleX(0.8478);">スタイル</span>
<span id="t69" class="t ui" style="left:1114px;top:130.9px;font-size:11.5px;line-height:16px;color:#666;transform:scaleX(0.8261);">セル</span>
<span id="t70" class="t ui" style="left:1283px;top:130.9px;font-size:11.5px;line-height:16px;color:#666;transform:scaleX(1.0435);">編集</span>
<svg class="b" style="left:184px;top:137px;" width="8" height="8" viewBox="0 0 8 8"><path d="M0.5 5V0.5H5" fill="none" stroke="#777" stroke-width="1"/><path d="M3 3L6.5 6.5" stroke="#777" stroke-width="1"/><path d="M7.2 3.4V7.2H3.4Z" fill="#777"/></svg>
<svg class="b" style="left:432px;top:137px;" width="8" height="8" viewBox="0 0 8 8"><path d="M0.5 5V0.5H5" fill="none" stroke="#777" stroke-width="1"/><path d="M3 3L6.5 6.5" stroke="#777" stroke-width="1"/><path d="M7.2 3.4V7.2H3.4Z" fill="#777"/></svg>
<svg class="b" style="left:727px;top:137px;" width="8" height="8" viewBox="0 0 8 8"><path d="M0.5 5V0.5H5" fill="none" stroke="#777" stroke-width="1"/><path d="M3 3L6.5 6.5" stroke="#777" stroke-width="1"/><path d="M7.2 3.4V7.2H3.4Z" fill="#777"/></svg>
<svg class="b" style="left:867px;top:137px;" width="8" height="8" viewBox="0 0 8 8"><path d="M0.5 5V0.5H5" fill="none" stroke="#777" stroke-width="1"/><path d="M3 3L6.5 6.5" stroke="#777" stroke-width="1"/><path d="M7.2 3.4V7.2H3.4Z" fill="#777"/></svg>
<span id="t71" class="t ui" style="left:7px;top:95.5px;font-size:12px;line-height:17px;color:#a0a0a0;transform:scaleX(0.8747);">貼り付け</span>
<svg class="b" style="left:27.5px;top:115px;" width="6" height="3" viewBox="0 0 6 3"><path d="M0 0H6 L3 3Z" fill="#b5b5b5"/></svg>
<span id="t72" class="t ui" style="left:74px;top:62.5px;font-size:12px;line-height:17px;color:#444;transform:scaleX(0.8331);">切り取り</span>
<span id="t73" class="t ui" style="left:73.5px;top:85px;font-size:12px;line-height:17px;color:#444;transform:scaleX(0.7358);">コピー</span>
<svg class="b" style="left:110px;top:91px;" width="6" height="3" viewBox="0 0 6 3"><path d="M0 0H6 L3 3Z" fill="#777"/></svg>
<span id="t74" class="t ui" style="left:74px;top:108px;font-size:12px;line-height:17px;color:#444;transform:scaleX(0.8634);">書式のコピー/貼り付け</span>
<div class="b" style="left:198px;top:65px;width:157px;height:23px;border:1px solid #ababab;box-sizing:border-box;background:#fff"></div>
<div class="b" style="left:354px;top:65px;width:41px;height:23px;border:1px solid #ababab;box-sizing:border-box;background:#fff"></div>
<span id="t75" class="t ui" style="left:202px;top:69.5px;font-size:12px;line-height:17px;color:#222;transform:scaleX(0.8744);">ＭＳ</span>
<span id="t76" class="t ui" style="left:231px;top:69.5px;font-size:12px;line-height:17px;color:#222;transform:scaleX(0.7415);">Ｐゴシック</span>
<svg class="b" style="left:344px;top:75.5px;" width="6" height="3" viewBox="0 0 6 3"><path d="M0 0H6 L3 3Z" fill="#777"/></svg>
<span id="t77" class="t ui" style="left:358px;top:67.5px;font-size:13px;line-height:18px;color:#222;transform:scaleX(1.0000);">11</span>
<svg class="b" style="left:384px;top:75.5px;" width="6" height="3" viewBox="0 0 6 3"><path d="M0 0H6 L3 3Z" fill="#777"/></svg>
<span id="t78" class="t ui" style="left:204.5px;top:98px;font-size:13px;line-height:18px;color:#444;font-weight:700;transform:scaleX(0.7987);">B</span>
<span id="t79" class="t serif" style="left:228px;top:98px;font-size:13px;line-height:18px;color:#444;font-weight:700;transform:scaleX(0.9877);font-style:italic;">I</span>
<span id="t80" class="t ui" style="left:248px;top:97.5px;font-size:13px;line-height:18px;color:#444;font-weight:700;transform:scaleX(0.8519);text-decoration:underline;">U</span>
<svg class="b" style="left:266px;top:106px;" width="6" height="3" viewBox="0 0 6 3"><path d="M0 0H6 L3 3Z" fill="#777"/></svg>
<div class="b" style="left:280px;top:96px;width:1px;height:22px;background:#e1e1e1"></div>
<svg class="b" style="left:309px;top:106px;" width="6" height="3" viewBox="0 0 6 3"><path d="M0 0H6 L3 3Z" fill="#777"/></svg>
<div class="b" style="left:323px;top:96px;width:1px;height:22px;background:#e1e1e1"></div>
<svg class="b" style="left:352px;top:106px;" width="6" height="3" viewBox="0 0 6 3"><path d="M0 0H6 L3 3Z" fill="#777"/></svg>
<svg class="b" style="left:386px;top:106px;" width="6" height="3" viewBox="0 0 6 3"><path d="M0 0H6 L3 3Z" fill="#777"/></svg>
<div class="b" style="left:400px;top:96px;width:1px;height:22px;background:#e1e1e1"></div>
<svg class="b" style="left:429px;top:106px;" width="6" height="3" viewBox="0 0 6 3"><path d="M0 0H6 L3 3Z" fill="#777"/></svg>
<div class="b" style="left:470px;top:65px;width:22px;height:23px;background:#9fd5b7"></div>
<div class="b" style="left:518px;top:65px;width:1px;height:22px;background:#e1e1e1"></div>
<div class="b" style="left:518px;top:96px;width:1px;height:22px;background:#e1e1e1"></div>
<div class="b" style="left:571px;top:65px;width:1px;height:53px;background:#e1e1e1"></div>
<svg class="b" style="left:545px;top:75.5px;" width="6" height="3" viewBox="0 0 6 3"><path d="M0 0H6 L3 3Z" fill="#777"/></svg>
<span id="t81" class="t ui" style="left:598px;top:71px;font-size:12px;line-height:17px;color:#444;transform:scaleX(0.8701);">折り返して全体を表示する</span>
<span id="t82" class="t ui" style="left:598px;top:100.5px;font-size:12px;line-height:17px;color:#444;transform:scaleX(0.8735);">セルを結合して中央揃え</span>
<svg class="b" style="left:723px;top:106px;" width="6" height="3" viewBox="0 0 6 3"><path d="M0 0H6 L3 3Z" fill="#777"/></svg>
<div class="b" style="left:743px;top:65px;width:132px;height:23px;border:1px solid #ababab;box-sizing:border-box;background:#fff"></div>
<span id="t83" class="t ui" style="left:746px;top:69.5px;font-size:12px;line-height:17px;color:#222;transform:scaleX(0.9993);">標準</span>
<svg class="b" style="left:863px;top:75.5px;" width="6" height="3" viewBox="0 0 6 3"><path d="M0 0H6 L3 3Z" fill="#777"/></svg>
<svg class="b" style="left:767px;top:106px;" width="6" height="3" viewBox="0 0 6 3"><path d="M0 0H6 L3 3Z" fill="#777"/></svg>
<span id="t84" class="t ui" style="left:782px;top:96.8px;font-size:15px;line-height:21px;color:#555;transform:scaleX(0.9967);">%</span>
<span id="t85" class="t serif" style="left:806px;top:89.5px;font-size:18px;line-height:25px;color:#555;font-weight:700;transform:scaleX(1.1111);">,</span>
<div class="b" style="left:825px;top:96px;width:1px;height:22px;background:#e1e1e1"></div>
<span id="t86" class="t ui" style="left:884.5px;top:95.5px;font-size:12px;line-height:17px;color:#444;transform:scaleX(0.9476);">条件付き</span>
<span id="t87" class="t ui" style="left:890px;top:111px;font-size:12px;line-height:17px;color:#444;transform:scaleX(1.0410);">書式</span>
<svg class="b" style="left:918px;top:114.5px;" width="6" height="3" viewBox="0 0 6 3"><path d="M0 0H6 L3 3Z" fill="#777"/></svg>
<span id="t88" class="t ui" style="left:935px;top:95.5px;font-size:12px;line-height:17px;color:#444;transform:scaleX(0.7598);">テーブルとして</span>
<span id="t89" class="t ui" style="left:939px;top:111px;font-size:12px;line-height:17px;color:#444;transform:scaleX(0.9788);">書式設定</span>
<svg class="b" style="left:989.5px;top:114.5px;" width="6" height="3" viewBox="0 0 6 3"><path d="M0 0H6 L3 3Z" fill="#777"/></svg>
<span id="t90" class="t ui" style="left:1011px;top:95.5px;font-size:12px;line-height:17px;color:#444;transform:scaleX(0.8330);">セルの</span>
<span id="t91" class="t ui" style="left:1003px;top:111px;font-size:12px;line-height:17px;color:#444;transform:scaleX(0.7706);">スタイル</span>
<svg class="b" style="left:1043px;top:114.5px;" width="6" height="3" viewBox="0 0 6 3"><path d="M0 0H6 L3 3Z" fill="#777"/></svg>
<span id="t92" class="t ui" style="left:1069.5px;top:95.5px;font-size:12px;line-height:17px;color:#444;transform:scaleX(0.9369);">挿入</span>
<svg class="b" style="left:1079.5px;top:114.5px;" width="6" height="3" viewBox="0 0 6 3"><path d="M0 0H6 L3 3Z" fill="#777"/></svg>
<span id="t93" class="t ui" style="left:1112.5px;top:95.5px;font-size:12px;line-height:17px;color:#444;transform:scaleX(0.9369);">削除</span>
<svg class="b" style="left:1122px;top:114.5px;" width="6" height="3" viewBox="0 0 6 3"><path d="M0 0H6 L3 3Z" fill="#777"/></svg>
<span id="t94" class="t ui" style="left:1154px;top:95.5px;font-size:12px;line-height:17px;color:#444;transform:scaleX(0.9785);">書式</span>
<svg class="b" style="left:1164px;top:114.5px;" width="6" height="3" viewBox="0 0 6 3"><path d="M0 0H6 L3 3Z" fill="#777"/></svg>
<span id="t95" class="t ui" style="left:1218px;top:62.5px;font-size:12px;line-height:17px;color:#444;transform:scaleX(0.8634);">オート SUM</span>
<svg class="b" style="left:1285.4px;top:66.9px;" width="6" height="3" viewBox="0 0 6 3"><path d="M0 0H6 L3 3Z" fill="#777"/></svg>
<span id="t96" class="t ui" style="left:1218px;top:85.5px;font-size:12px;line-height:17px;color:#444;transform:scaleX(0.6850);">フィル</span>
<svg class="b" style="left:1246px;top:89.5px;" width="6" height="3" viewBox="0 0 6 3"><path d="M0 0H6 L3 3Z" fill="#777"/></svg>
<span id="t97" class="t ui" style="left:1218px;top:108.5px;font-size:12px;line-height:17px;color:#444;transform:scaleX(0.6664);">クリア</span>
<svg class="b" style="left:1245.3px;top:112.9px;" width="6" height="3" viewBox="0 0 6 3"><path d="M0 0H6 L3 3Z" fill="#777"/></svg>
<span id="t98" class="t ui" style="left:1299px;top:95.5px;font-size:12px;line-height:17px;color:#444;transform:scaleX(0.8331);">並べ替えと</span>
<span id="t99" class="t ui" style="left:1298px;top:111px;font-size:12px;line-height:17px;color:#444;transform:scaleX(0.7362);">フィルター</span>
<svg class="b" style="left:1344px;top:114.5px;" width="6" height="3" viewBox="0 0 6 3"><path d="M0 0H6 L3 3Z" fill="#777"/></svg>
<span id="t100" class="t ui" style="left:1357.5px;top:95.5px;font-size:12px;line-height:17px;color:#444;transform:scaleX(0.8746);">検索と</span>
<span id="t101" class="t ui" style="left:1357px;top:111px;font-size:12px;line-height:17px;color:#444;transform:scaleX(0.9785);">選択</span>
<svg class="b" style="left:1384px;top:114.5px;" width="6" height="3" viewBox="0 0 6 3"><path d="M0 0H6 L3 3Z" fill="#777"/></svg>
<svg class="b" style="left:1437px;top:135px;" width="10" height="7" viewBox="0 0 10 7"><path d="M1 6L5 2L9 6" stroke="#666" stroke-width="1.6" fill="none"/></svg>
<svg class="b" style="left:15px;top:60px;" width="31" height="33" viewBox="0 0 31 33"><path d="M1 4.6H24.4V29H1Z" fill="#d8d3da"/><path d="M6.4 2.6H19V6.8H6.4Z" fill="#bdb8bf"/><path d="M10.4 0.4H15V3.4H10.4Z" fill="#bdb8bf"/><path d="M15.5 14H24L29.2 19.2V32H15.5Z" fill="#f3f0f5" stroke="#c4c0c6"/><path d="M24 14V19.2H29.2" fill="none" stroke="#c4c0c6"/></svg>
<svg class="b" style="left:56px;top:60px;" width="15" height="16" viewBox="0 0 15 16"><path d="M3.6 0.8L9.8 10.4M10.4 0.8L4.2 10.4" stroke="#5a5a5a" stroke-width="1.8" fill="none"/><circle cx="3" cy="12" r="2.2" fill="none" stroke="#4a86c8" stroke-width="1.2"/><circle cx="11" cy="12" r="2.2" fill="none" stroke="#4a86c8" stroke-width="1.2"/></svg>
<svg class="b" style="left:55px;top:84px;" width="16" height="14" viewBox="0 0 16 14"><path d="M0.6 0.6H5.6L7.4 2.4V9.4H0.6Z" fill="#fff" stroke="#6a6a6a" stroke-width="1"/><path d="M2 3.4H5.6M2 5.4H5.6M2 7.4H4" stroke="#8a8a8a" stroke-width="0.8"/><path d="M6.6 3.6H11.6L14.4 6.4V13.4H6.6Z" fill="#fff" stroke="#5a5a5a" stroke-width="1"/><path d="M8.4 7.4H12.6M8.4 9.4H12.6M8.4 11.4H12.6" stroke="#7a7a7a" stroke-width="0.8"/></svg>
<svg class="b" style="left:56px;top:105px;" width="16" height="16" viewBox="0 0 16 16"><path d="M0.6 11L5.6 6.6L9.6 10.6L6 15.4C4 13.6 2.6 12.6 0.6 11Z" fill="#f0b15e"/><path d="M5.6 6.6L7 5.4L10.8 9.2L9.6 10.6Z" fill="#6a6a6a"/><path d="M8.4 5.6L12.4 1.4L14.8 3.8L10.6 7.8Z" fill="#5a5a5a"/></svg>
<span id="t102" class="t ui" style="left:401.2px;top:67.2px;font-size:13.5px;line-height:19px;color:#606060;transform:scaleX(1.0648);">A</span>
<svg class="b" style="left:409.2px;top:69px;" width="5" height="3.4" viewBox="0 0 5 3.4"><path d="M0 3.2H5L2.5 0.2Z" fill="#7d8894"/></svg>
<span id="t103" class="t ui" style="left:424.3px;top:70.5px;font-size:10.5px;line-height:15px;color:#606060;transform:scaleX(1.1261);">A</span>
<svg class="b" style="left:431.4px;top:69.2px;" width="5" height="3.4" viewBox="0 0 5 3.4"><path d="M0 0.2H5L2.5 3.2Z" fill="#7d8894"/></svg>
<svg class="b" style="left:289px;top:100px;shape-rendering:crispEdges;" width="14" height="14" viewBox="0 0 14 14"><path d="M0.5 0.5H12.5V12.5H0.5ZM6.5 0.5V12.5M0.5 6.5H12.5" fill="none" stroke="#8a8a8a" stroke-width="1" stroke-dasharray="1 1"/><path d="M0 12.5H13" stroke="#555" stroke-width="1"/></svg>
<svg class="b" style="left:330px;top:97px;" width="19" height="19" viewBox="0 0 19 19"><path d="M5.4 6.2L10 1.8L15.4 7.8L9.6 12.6Z" fill="#fff" stroke="#5a5a5a" stroke-width="1.1"/><path d="M7.4 1.2V6.4" stroke="#5a5a5a" stroke-width="1.1"/><path d="M15.2 8.4C16.4 10 17.2 11 17.2 12C17.2 13 16.4 13.6 15.6 13.6C14.6 13.6 14 12.8 14 12C14 11 14.6 10 15.2 8.4Z" fill="#3b7cbf"/><path d="M10.4 7.2L14.8 8L10 11.8Z" fill="#3b7cbf" opacity="0.8"/><rect x="1.4" y="13.8" width="15.4" height="4.2" fill="#fbf21a"/></svg>
<span id="t104" class="t ui" style="left:369.5px;top:95px;font-size:13.5px;line-height:19px;color:#555;transform:scaleX(0.9983);">A</span>
<div class="b" style="left:365px;top:111px;width:16px;height:4px;background:#e8202a"></div>
<span id="t105" class="t ui" style="left:412.5px;top:98px;font-size:7px;line-height:10px;color:#444;font-weight:700;transform:scaleX(0.9286);">ア</span>
<span id="t106" class="t ui" style="left:411.5px;top:104.5px;font-size:9px;line-height:13px;color:#444;transform:scaleX(0.9428);">亜</span>
<svg class="b" style="left:452px;top:67px;shape-rendering:crispEdges;" width="16" height="14" viewBox="0 0 16 14"><path d="M0 1.5H14" stroke="#777" stroke-width="1"/><path d="M0 4.5H14" stroke="#777" stroke-width="1"/><path d="M0 7.5H14" stroke="#777" stroke-width="1"/></svg>
<svg class="b" style="left:474px;top:71px;shape-rendering:crispEdges;" width="16" height="14" viewBox="0 0 16 14"><path d="M0 1.5H14" stroke="#555" stroke-width="1"/><path d="M0 4.5H14" stroke="#555" stroke-width="1"/><path d="M0 7.5H14" stroke="#555" stroke-width="1"/></svg>
<svg class="b" style="left:496px;top:76px;shape-rendering:crispEdges;" width="16" height="14" viewBox="0 0 16 14"><path d="M0 1.5H14" stroke="#777" stroke-width="1"/><path d="M0 4.5H14" stroke="#777" stroke-width="1"/><path d="M0 7.5H14" stroke="#777" stroke-width="1"/></svg>
<svg class="b" style="left:452px;top:101px;shape-rendering:crispEdges;" width="16" height="14" viewBox="0 0 16 14"><path d="M0 1.5H14" stroke="#777" stroke-width="1"/><path d="M0 4.5H9.5" stroke="#777" stroke-width="1"/><path d="M0 7.5H14" stroke="#777" stroke-width="1"/><path d="M0 10.5H9.5" stroke="#777" stroke-width="1"/></svg>
<svg class="b" style="left:474px;top:101px;shape-rendering:crispEdges;" width="16" height="14" viewBox="0 0 16 14"><path d="M0 1.5H14" stroke="#777" stroke-width="1"/><path d="M2 4.5H12" stroke="#777" stroke-width="1"/><path d="M0 7.5H14" stroke="#777" stroke-width="1"/><path d="M2 10.5H12" stroke="#777" stroke-width="1"/></svg>
<svg class="b" style="left:496px;top:101px;shape-rendering:crispEdges;" width="16" height="14" viewBox="0 0 16 14"><path d="M0 1.5H14" stroke="#777" stroke-width="1"/><path d="M4 4.5H14" stroke="#777" stroke-width="1"/><path d="M0 7.5H14" stroke="#777" stroke-width="1"/><path d="M4 10.5H14" stroke="#777" stroke-width="1"/></svg>
<svg class="b" style="left:525px;top:67px;" width="18" height="18" viewBox="0 0 18 18"><g transform="rotate(-42 8 9)"><text x="0" y="9.6" font-family="Liberation Sans,sans-serif" font-size="10.5" font-weight="400" fill="#444">ab</text></g><path d="M4 15.6L14 7" stroke="#666" stroke-width="1.1"/><path d="M11.2 6.4L15.4 5.8L14.4 9.8Z" fill="#666"/></svg>
<svg class="b" style="left:526px;top:101px;" width="17" height="12" viewBox="0 0 17 12"><path d="M7 1.5H16M9 4.5H16M9 7.5H16M7 10.5H16" stroke="#777" stroke-width="1" shape-rendering="crispEdges"/><path d="M0.6 6H7.6M3.4 3.2L0.6 6L3.4 8.8" fill="none" stroke="#3b7cbf" stroke-width="1.4"/></svg>
<svg class="b" style="left:548px;top:101px;" width="17" height="12" viewBox="0 0 17 12"><path d="M7 1.5H16M9 4.5H16M9 7.5H16M7 10.5H16" stroke="#777" stroke-width="1" shape-rendering="crispEdges"/><path d="M0 6H7M4.2 3.2L7 6L4.2 8.8" fill="none" stroke="#3b7cbf" stroke-width="1.4"/></svg>
<svg class="b" style="left:578px;top:67px;" width="18" height="17" viewBox="0 0 18 17"><rect x="1.5" y="1.5" width="9" height="4" fill="#fff" stroke="#6a6a6a" shape-rendering="crispEdges"/><path d="M3 3.5H9M10.5 3.5H15" stroke="#6a6a6a" stroke-width="1" shape-rendering="crispEdges"/><rect x="1.5" y="8.5" width="10" height="7" fill="#fff" stroke="#6a6a6a" shape-rendering="crispEdges"/><path d="M3 10.5H9M3 12.5H9" stroke="#6a6a6a" stroke-width="1" shape-rendering="crispEdges"/><path d="M16.4 5.6C16.6 8.6 15 10.4 12.4 10.4M14.4 8L12 10.4L14.4 12.6" fill="none" stroke="#3b7cbf" stroke-width="1.2"/></svg>
<svg class="b" style="left:579px;top:99px;" width="16" height="16" viewBox="0 0 16 16"><path d="M0.5 0.5H15.5V15.5H0.5Z" fill="#fff" stroke="#5a5a5a" stroke-width="1"/><path d="M0.5 4.5H15.5M0.5 11.5H15.5M8 0.5V4.5M8 11.5V15.5" stroke="#5a5a5a" stroke-width="1" shape-rendering="crispEdges"/><path d="M3 8H13M5 6L3 8L5 10M11 6L13 8L11 10" fill="none" stroke="#3b7cbf" stroke-width="1.1"/></svg>
<svg class="b" style="left:746px;top:99px;" width="18" height="17" viewBox="0 0 18 17"><rect x="0.6" y="0.6" width="15" height="8.4" fill="#fff" stroke="#3b6fb5" stroke-width="1.2"/><circle cx="8" cy="4.8" r="2.2" fill="#3b6fb5"/><ellipse cx="11.4" cy="9.6" rx="4.4" ry="1.7" fill="#f5c88a" stroke="#d9a050" stroke-width="0.6"/><ellipse cx="9.4" cy="12.2" rx="4.4" ry="1.7" fill="#f5c88a" stroke="#d9a050" stroke-width="0.6"/><ellipse cx="10.4" cy="14.8" rx="4.4" ry="1.7" fill="#f5c88a" stroke="#d9a050" stroke-width="0.6"/></svg>
<span id="t107" class="t ui" style="left:839.6px;top:98px;font-size:8.5px;line-height:12px;color:#555;transform:scaleX(1.0996);">.0</span>
<span id="t108" class="t ui" style="left:835.2px;top:105px;font-size:8.5px;line-height:12px;color:#555;transform:scaleX(1.0314);">.00</span>
<svg class="b" style="left:832.6px;top:100.5px;" width="8" height="6.4" viewBox="0 0 8 6.4"><path d="M0.8 3.2H7.2M3.4 0.6L0.8 3.2L3.4 5.8" fill="none" stroke="#3b7cbf" stroke-width="1.2"/></svg>
<span id="t109" class="t ui" style="left:857.1px;top:98px;font-size:8.5px;line-height:12px;color:#555;transform:scaleX(1.0230);">.00</span>
<span id="t110" class="t ui" style="left:862.5px;top:105px;font-size:8.5px;line-height:12px;color:#555;transform:scaleX(0.9445);">.0</span>
<svg class="b" style="left:854.6px;top:107.4px;" width="8" height="6.4" viewBox="0 0 8 6.4"><path d="M0.6 3.2H7M4.4 0.6L7 3.2L4.4 5.8" fill="none" stroke="#3b7cbf" stroke-width="1.2"/></svg>
<svg class="b" style="left:894px;top:61px;" width="31" height="32" viewBox="0 0 31 32"><path d="M0.5 1.5H28V25.5H0.5Z" fill="#fff" stroke="#7a7a7a"/><path d="M0.5 7.5H28M0.5 13.5H28M0.5 19.5H28M8.5 1.5V25.5M14.5 1.5V25.5M21.5 1.5V25.5" stroke="#9a9a9a" stroke-width="1" shape-rendering="crispEdges"/><path d="M8.2 2H13.8V7H8.2Z" fill="#e0533a"/><path d="M8.2 8H18.7V13H8.2Z" fill="#3b7cbf"/><path d="M8.2 14H16.9V19H8.2Z" fill="#e0533a"/><path d="M8.2 20H11.9V25H8.2Z" fill="#3b7cbf"/><rect x="14.5" y="18" width="15.2" height="12.8" fill="#fff" stroke="#4a4a4a" stroke-width="1"/><path d="M18.2 23H26M18.2 26H26M24.2 20.8L20.2 28.2" stroke="#333" stroke-width="1.1"/></svg>
<svg class="b" style="left:953px;top:61px;" width="32" height="32" viewBox="0 0 32 32"><path d="M1.5 3.5H25.5V23.5H1.5Z" fill="#fff" stroke="#7a7a7a"/><path d="M7.5 8.5H25V23H7.5Z" fill="#c3d6ec"/><path d="M1.5 8.5H25.5M1.5 13.5H25.5M1.5 18.5H25.5M7.5 3.5V23.5M13.5 3.5V23.5M19.5 3.5V23.5" stroke="#9a9a9a" stroke-width="1" shape-rendering="crispEdges"/><path d="M29.4 7.8L30 12.4L23 23.2L19.4 19.8Z" fill="#6a6a6a"/><path d="M18.2 20.2C12.4 22.2 14 26.4 8 30.8C14 31.8 23.8 30 23.2 24.2Z" fill="#3b7cbf"/><path d="M18.8 25.2C17 24.2 15 26 14 28.2" stroke="#fff" stroke-width="1.1" fill="none"/></svg>
<svg class="b" style="left:1014px;top:61px;" width="32" height="32" viewBox="0 0 32 32"><path d="M0.5 1.5H25.5V22.5H0.5Z" fill="#fff" stroke="#7a7a7a"/><path d="M0.5 6.5H25.5M0.5 16.5H25.5M5.5 1.5V22.5M19.5 1.5V22.5" stroke="#9a9a9a" stroke-width="1" shape-rendering="crispEdges"/><path d="M5.5 6.5H19.5V16.5H5.5Z" fill="#b5cfe9" stroke="#8aa9cc"/><path d="M28.8 5.4L29.4 10L22 21L18.4 17.6Z" fill="#6a6a6a"/><path d="M17.2 18C11.4 20 12.6 24 6.6 28.4C12.6 29.4 22.8 27.8 22.2 22Z" fill="#3b7cbf"/><path d="M17.8 23C16 22 14 23.8 13 26" stroke="#fff" stroke-width="1.1" fill="none"/></svg>
<svg class="b" style="left:1069px;top:61px;shape-rendering:geometricPrecision;" width="28" height="30" viewBox="0 0 28 30"><rect x="0.5" y="1.5" width="7" height="5" fill="#fff" stroke="#7a7a7a" stroke-width="1"/><rect x="7.5" y="1.5" width="7" height="5" fill="#fff" stroke="#7a7a7a" stroke-width="1"/><rect x="11.5" y="9.5" width="7" height="5" fill="#c3d3e6" stroke="#8a8a8a"/><rect x="18.5" y="9.5" width="7" height="5" fill="#c3d3e6" stroke="#8a8a8a"/><rect x="0.5" y="17.5" width="7" height="5" fill="#fff" stroke="#7a7a7a" stroke-width="1"/><rect x="7.5" y="17.5" width="7" height="5" fill="#fff" stroke="#7a7a7a" stroke-width="1"/><rect x="0.5" y="22.5" width="7" height="5" fill="#fff" stroke="#7a7a7a" stroke-width="1"/><rect x="7.5" y="22.5" width="7" height="5" fill="#fff" stroke="#7a7a7a" stroke-width="1"/><path d="M1.2 12H8M4.4 9L1.4 12L4.4 15" fill="none" stroke="#3b6fb5" stroke-width="1.7"/></svg>
<svg class="b" style="left:1110px;top:61px;" width="30" height="30" viewBox="0 0 30 30"><rect x="0.5" y="1.5" width="7" height="5" fill="#fff" stroke="#7a7a7a" stroke-width="1"/><rect x="7.5" y="1.5" width="7" height="5" fill="#fff" stroke="#7a7a7a" stroke-width="1"/><rect x="6.5" y="9.5" width="8" height="5" fill="#c3d3e6" stroke="#8a8a8a"/><rect x="0.5" y="18.5" width="7" height="5" fill="#fff" stroke="#7a7a7a" stroke-width="1"/><rect x="7.5" y="18.5" width="7" height="5" fill="#fff" stroke="#7a7a7a" stroke-width="1"/><rect x="0.5" y="23.5" width="7" height="5" fill="#fff" stroke="#7a7a7a" stroke-width="1"/><rect x="7.5" y="23.5" width="7" height="5" fill="#fff" stroke="#7a7a7a" stroke-width="1"/><path d="M15 6.4C19 8.6 24 13 29 19.6M29 6.6C24 9.4 18.6 14 14.6 18.8" fill="none" stroke="#d9583a" stroke-width="1.7"/></svg>
<svg class="b" style="left:1152px;top:60px;" width="29" height="32" viewBox="0 0 29 32"><path d="M0.8 3.6H22.4M0.8 1V6.2M22.6 1V6.2M3.6 1.4L1.2 3.6L3.6 5.8M19.8 1.4L22.2 3.6L19.8 5.8" fill="none" stroke="#3b7cbf" stroke-width="1"/><path d="M0.5 7.5H27.5V27H0.5Z" fill="#fff" stroke="#8a8a8a"/><path d="M0.5 12.5H27.5M0.5 22.5H27.5M7.5 7.5V27M15.5 7.5V27M22.5 7.5V27" stroke="#a5a5a5" stroke-width="1" shape-rendering="crispEdges"/><path d="M8 13H15V22H8Z" fill="#3b7cbf"/><path d="M0.5 27V31H8L9.6 28.8H15.4L17 31H27.5V27" fill="#fff" stroke="#8a8a8a"/></svg>
<svg class="b" style="left:1199px;top:61px;" width="15" height="14" viewBox="0 0 15 14"><path d="M12.6 3.4V1H1.6L7.4 6.8L1.6 12.8H12.8V10.2" fill="none" stroke="#444" stroke-width="1.9"/></svg>
<svg class="b" style="left:1200px;top:83px;" width="14" height="15" viewBox="0 0 14 15"><rect x="0.5" y="0.5" width="13" height="14" fill="#fff" stroke="#8a8a8a"/><path d="M0 0H14V2.6H0Z" fill="#8a8a8a"/><path d="M7 4.6V11.6M3.8 8.4L7 11.8L10.2 8.4" fill="none" stroke="#3b7cbf" stroke-width="1.8"/></svg>
<svg class="b" style="left:1200px;top:106px;" width="15" height="15" viewBox="0 0 15 15"><path d="M8.6 1.6L13.6 5.4L7.6 12L2.2 8.4Z" fill="#e8839a" stroke="#d55b78" stroke-width="0.8"/><path d="M2.2 8.4L7.6 12L6.4 13.4H3.4L0.8 10.6Z" fill="#fff" stroke="#b5b5b5" stroke-width="0.8"/><path d="M3 14.4H12.4" stroke="#8a8a8a" stroke-width="1"/></svg>
<span id="t111" class="t ui" style="left:1309.5px;top:59px;font-size:14.5px;line-height:20px;color:#3b6fb5;transform:scaleX(1.0339);">A</span>
<span id="t112" class="t ui" style="left:1310px;top:71px;font-size:16px;line-height:22px;color:#9a4ea0;transform:scaleX(0.9712);">Z</span>
<svg class="b" style="left:1320px;top:69px;" width="19" height="17" viewBox="0 0 19 17"><path d="M0.8 1H18.2L11.4 7.6V15.8L7.8 15.8V7.6Z" fill="#7a7a7a"/></svg>
<svg class="b" style="left:1360px;top:63px;" width="28" height="25" viewBox="0 0 28 25"><path d="M6.4 1H10V4H6.4ZM18 1H21.6V4H18Z" fill="#5a5a5a"/><path d="M5.4 4H11.4V8H12V24H1.6V14C1.6 10 3.4 7 5.4 4Z" fill="#6a6a6a"/><path d="M22.6 4H16.6V8H16V24H26.4V14C26.4 10 24.6 7 22.6 4Z" fill="#6a6a6a"/><path d="M11.6 9H16.4V15H11.6Z" fill="#6a6a6a"/><path d="M3.6 14.6V22M24.4 14.6V22" stroke="#9a9a9a" stroke-width="1"/></svg></div>
<div id="fbar"><div class="b" style="left:6px;top:158px;width:102px;height:24px;border:1px solid #c6c6c6;box-sizing:border-box"></div>
<span id="t113" class="t ui" style="left:13px;top:161.5px;font-size:13px;line-height:18px;color:#444;transform:scaleX(1.0269);">N27</span>
<svg class="b" style="left:94px;top:167.5px;" width="7" height="4" viewBox="0 0 7 4"><path d="M0 0H7 L3.5 4Z" fill="#777"/></svg>
<div class="b" style="left:122px;top:165px;width:2px;height:2px;background:#a6a6a6"></div>
<div class="b" style="left:122px;top:169px;width:2px;height:2px;background:#a6a6a6"></div>
<div class="b" style="left:122px;top:173px;width:2px;height:2px;background:#a6a6a6"></div>
<div class="b" style="left:138px;top:158px;width:111px;height:24px;border:1px solid #c6c6c6;box-sizing:border-box;border-right:none"></div>
<div class="b" style="left:251px;top:158px;width:1201px;height:24px;border:1px solid #c6c6c6;box-sizing:border-box"></div>
<svg class="b" style="left:147px;top:162px;" width="20" height="16" viewBox="0 0 20 16"><path d="M2 2L17 15M17 2L2 15" stroke="#bdbdbd" stroke-width="1.8" fill="none"/></svg>
<svg class="b" style="left:183px;top:162px;" width="21" height="16" viewBox="0 0 21 16"><path d="M2 9L7 14L19 2" stroke="#bdbdbd" stroke-width="2.2" fill="none"/></svg>
<span id="t114" class="t serif" style="left:220px;top:154px;font-size:22px;line-height:31px;color:#8a8a8a;font-weight:700;transform:scaleX(1.2281);font-style:italic;">f</span>
<span id="t115" class="t serif" style="left:228.5px;top:161.5px;font-size:16px;line-height:22px;color:#8a8a8a;font-weight:700;transform:scaleX(1.0625);font-style:italic;">x</span>
<svg class="b" style="left:1437px;top:167px;" width="13" height="10" viewBox="0 0 13 10"><path d="M1.6 2L6.5 7.2L11.4 2" stroke="#666" stroke-width="2.6" fill="none"/></svg></div>
<div class="b" style="left:0px;top:0px;width:1458px;height:1px;background:#217346"></div>
<div class="b" style="left:0px;top:0px;width:1px;height:937px;background:#217346"></div>
<div class="b" style="left:1457px;top:0px;width:1px;height:937px;background:#217346"></div>
</div></body></html>
